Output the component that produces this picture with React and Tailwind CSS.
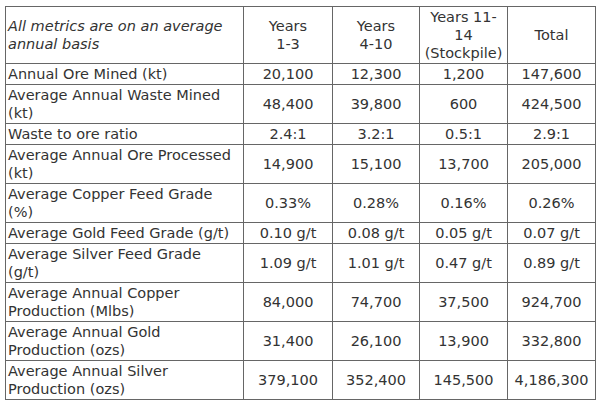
const rows = [
  ["Annual Ore Mined (kt)", "20,100", "12,300", "1,200", "147,600"],
  ["Average Annual Waste Mined (kt)", "48,400", "39,800", "600", "424,500"],
  ["Waste to ore ratio", "2.4:1", "3.2:1", "0.5:1", "2.9:1"],
  ["Average Annual Ore Processed (kt)", "14,900", "15,100", "13,700", "205,000"],
  ["Average Copper Feed Grade (%)", "0.33%", "0.28%", "0.16%", "0.26%"],
  ["Average Gold Feed Grade (g/t)", "0.10 g/t", "0.08 g/t", "0.05 g/t", "0.07 g/t"],
  ["Average Silver Feed Grade (g/t)", "1.09 g/t", "1.01 g/t", "0.47 g/t", "0.89 g/t"],
  ["Average Annual Copper Production (Mlbs)", "84,000", "74,700", "37,500", "924,700"],
  ["Average Annual Gold Production (ozs)", "31,400", "26,100", "13,900", "332,800"],
  ["Average Annual Silver Production (ozs)", "379,100", "352,400", "145,500", "4,186,300"],
];

const cell = "border border-[#666] px-[2px] py-[1px] align-middle";

export default function App() {
  return (
    <div className="w-[600px] h-[404px] bg-white pt-[6px] pl-[5px] font-['DejaVu_Sans',Verdana,sans-serif] text-[14.5px] leading-[18px] text-[#333]">
      <table className="table-fixed border-collapse w-[590px]">
        <colgroup>
          <col className="w-[238px]" />
          <col className="w-[89px]" />
          <col className="w-[87px]" />
          <col className="w-[88px]" />
          <col className="w-[88px]" />
        </colgroup>
        <thead>
          <tr>
            <th className={`${cell} pr-[8px] text-left font-normal italic`}>
              All metrics are on an average annual basis
            </th>
            <th className={`${cell} text-center font-normal`}>Years<br />1-3</th>
            <th className={`${cell} text-center font-normal`}>Years<br />4-10</th>
            <th className={`${cell} text-center font-normal`}>Years 11-<br />14<br />(Stockpile)</th>
            <th className={`${cell} text-center font-normal`}>Total</th>
          </tr>
        </thead>
        <tbody>
          {rows.map((r) => (
            <tr key={r[0]}>
              <td className={`${cell} pr-[8px] text-left`}>{r[0]}</td>
              {r.slice(1).map((v, i) => (
                <td key={i} className={`${cell} text-center`}>{v}</td>
              ))}
            </tr>
          ))}
        </tbody>
      </table>
    </div>
  );
}
